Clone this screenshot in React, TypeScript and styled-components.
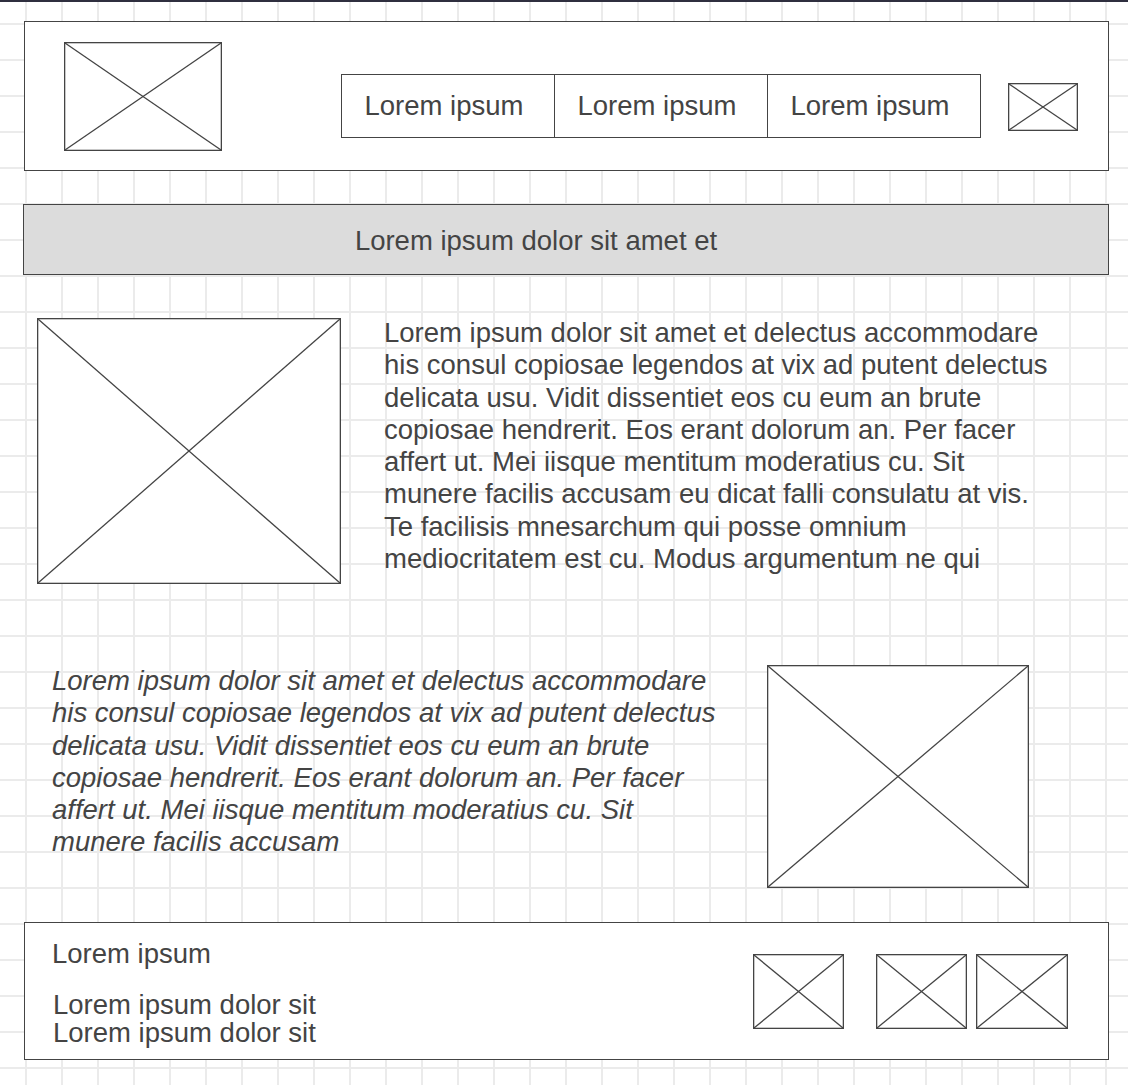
import React from 'react'
import styled, { createGlobalStyle } from 'styled-components'

const GlobalStyle = createGlobalStyle`
  * {
    box-sizing: border-box;
  }

  body {
    background-color: #fff;
    background-image: linear-gradient(#ebebeb 2px, transparent 2px),
      linear-gradient(90deg, #ebebeb 2px, transparent 2px);
    background-position: 25px 23px;
    background-size: 36px 36px;
    color: #444;
    font-family: 'Liberation Sans', Arial, sans-serif;
    margin: 0;
  }
`

const Page = styled.div`
  border-top: 2px solid #2f2f3f;
  min-height: 1085px;
  padding: 19px 19px 0 24px;
  width: 1128px;
`

const Box = styled.div`
  background: #fff;
  border: 1px solid #444;
`

const Header = styled(Box)`
  align-items: center;
  display: flex;
  height: 150px;
  padding-left: 39px;
  width: 1085px;
`

const Nav = styled.nav`
  display: flex;
  margin-left: 119px;
  margin-top: 20px;
`

const NavItem = styled.div`
  align-items: center;
  background: #fff;
  border: 1px solid #444;
  display: flex;
  font-size: 27.5px;
  height: 64px;
  justify-content: center;
  padding-right: 8px;
  width: 214px;

  & + & {
    border-left: none;
    width: 213px;
  }
`

const Banner = styled(Box)`
  align-items: center;
  background: #dcdcdc;
  display: flex;
  font-size: 27.5px;
  height: 71px;
  justify-content: center;
  margin: 33px 0 0 -1px;
  padding: 2px 60px 0 0;
  width: 1086px;
`

const Section = styled.section<{ gap: number }>`
  align-items: flex-start;
  display: flex;
  margin-top: ${(props) => props.gap}px;
`

const Paragraph = styled.p<{ italic?: boolean }>`
  font-size: 27.5px;
  font-style: ${(props) => (props.italic ? 'italic' : 'normal')};
  line-height: 32.3px;
  margin: 0;
  width: 670px;
`

const Footer = styled(Box)`
  align-items: center;
  display: flex;
  height: 138px;
  margin-top: 34px;
  padding: 0 40px 0 27px;
  width: 1085px;
`

const FooterText = styled.div`
  align-self: flex-start;
  font-size: 27.5px;
  padding-top: 15px;
`

const FooterTitle = styled.div`
  line-height: 32px;
  margin-bottom: 21px;
`

const FooterLine = styled.div`
  line-height: 28px;
  padding-left: 1px;
`

const FooterIcons = styled.div`
  align-items: center;
  display: flex;
  margin-left: auto;
`

const Frame = styled.div<{ w: number; h: number; ml?: number; mt?: number }>`
  background: #fff;
  flex-shrink: 0;
  height: ${(props) => props.h}px;
  margin-left: ${(props) => props.ml ?? 0}px;
  margin-top: ${(props) => props.mt ?? 0}px;
  width: ${(props) => props.w}px;

  svg {
    display: block;
    height: 100%;
    width: 100%;
  }
`

type PlaceholderProps = { w: number; h: number; ml?: number; mt?: number }

const Placeholder: React.FC<PlaceholderProps> = (props) => {
  const { w, h } = props
  return (
    <Frame {...props}>
      <svg viewBox={`0 0 ${w} ${h}`} fill="none" stroke="#444" strokeWidth={1.3}>
        <rect x={0.65} y={0.65} width={w - 1.3} height={h - 1.3} />
        <line x1={1} y1={1} x2={w - 1} y2={h - 1} />
        <line x1={1} y1={h - 1} x2={w - 1} y2={1} />
      </svg>
    </Frame>
  )
}

const introText =
  'Lorem ipsum dolor sit amet et delectus accommodare his consul copiosae legendos at vix ad putent delectus delicata usu. Vidit dissentiet eos cu eum an brute copiosae hendrerit. Eos erant dolorum an. Per facer affert ut. Mei iisque mentitum moderatius cu. Sit munere facilis accusam eu dicat falli consulatu at vis. Te facilisis mnesarchum qui posse omnium mediocritatem est cu. Modus argumentum ne qui'

const quoteText =
  'Lorem ipsum dolor sit amet et delectus accommodare his consul copiosae legendos at vix ad putent delectus delicata usu. Vidit dissentiet eos cu eum an brute copiosae hendrerit. Eos erant dolorum an. Per facer affert ut. Mei iisque mentitum moderatius cu. Sit munere facilis accusam'

export default function App() {
  const navItems = ['Lorem ipsum', 'Lorem ipsum', 'Lorem ipsum']

  return (
    <>
      <GlobalStyle />
      <Page>
        <Header>
          <Placeholder w={158} h={109} />
          <Nav>
            {navItems.map((item, index) => (
              <NavItem key={index}>{item}</NavItem>
            ))}
          </Nav>
          <Placeholder w={70} h={48} ml={27} mt={22} />
        </Header>

        <Banner>Lorem ipsum dolor sit amet et</Banner>

        <Section gap={43}>
          <Placeholder w={304} h={266} ml={13} />
          <Paragraph style={{ marginLeft: 43, marginTop: -1 }}>{introText}</Paragraph>
        </Section>

        <Section gap={81}>
          <Paragraph italic style={{ marginLeft: 28 }}>
            {quoteText}
          </Paragraph>
          <Placeholder w={262} h={223} ml={45} />
        </Section>

        <Footer>
          <FooterText>
            <FooterTitle>Lorem ipsum</FooterTitle>
            <FooterLine>Lorem ipsum dolor sit</FooterLine>
            <FooterLine>Lorem ipsum dolor sit</FooterLine>
          </FooterText>
          <FooterIcons>
            <Placeholder w={91} h={75} />
            <Placeholder w={91} h={75} ml={32} />
            <Placeholder w={92} h={75} ml={9} />
          </FooterIcons>
        </Footer>
      </Page>
    </>
  )
}
